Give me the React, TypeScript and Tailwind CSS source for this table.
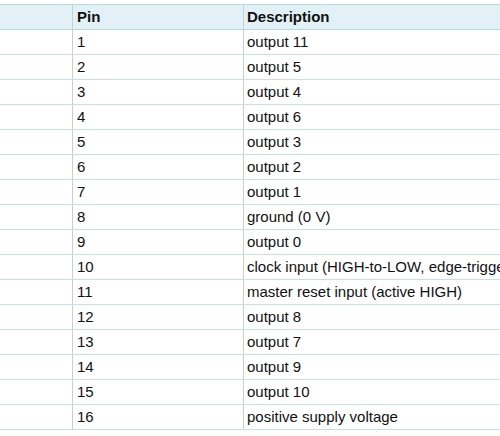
import React from "react";

const rows: [string, string][] = [
  ["1", "output 11"],
  ["2", "output 5"],
  ["3", "output 4"],
  ["4", "output 6"],
  ["5", "output 3"],
  ["6", "output 2"],
  ["7", "output 1"],
  ["8", "ground (0 V)"],
  ["9", "output 0"],
  ["10", "clock input (HIGH-to-LOW, edge-triggered)"],
  ["11", "master reset input (active HIGH)"],
  ["12", "output 8"],
  ["13", "output 7"],
  ["14", "output 9"],
  ["15", "output 10"],
  ["16", "positive supply voltage"],
];

export default function App() {
  return (
    <div
      className="w-[500px] h-[436px] overflow-hidden bg-white pt-[4px] text-[15px] text-[#111]"
      style={{ fontFamily: '"Liberation Sans", Arial, sans-serif' }}
    >
      <div className="w-[700px]">
        <div className="flex h-[26px] border-y border-[#b4d8dc] bg-[#e1f1f6] font-bold">
          <div className="w-[73px] shrink-0 border-r border-[#c4d4d6]" />
          <div className="w-[171px] shrink-0 border-r border-[#c4d4d6] pl-[4px] leading-[24px]">Pin</div>
          <div className="flex-1 pl-[3px] leading-[24px] whitespace-nowrap">Description</div>
        </div>
        {rows.map(([p, d]) => (
          <div key={p} className="flex h-[25px] border-b border-[#c8e0e2]">
            <div className="w-[73px] shrink-0 border-r border-[#c4d0d2]" />
            <div className="w-[171px] shrink-0 border-r border-[#c4d0d2] pl-[4px] leading-[24px]">{p}</div>
            <div className="flex-1 pl-[3px] leading-[24px] whitespace-nowrap">{d}</div>
          </div>
        ))}
      </div>
    </div>
  );
}
